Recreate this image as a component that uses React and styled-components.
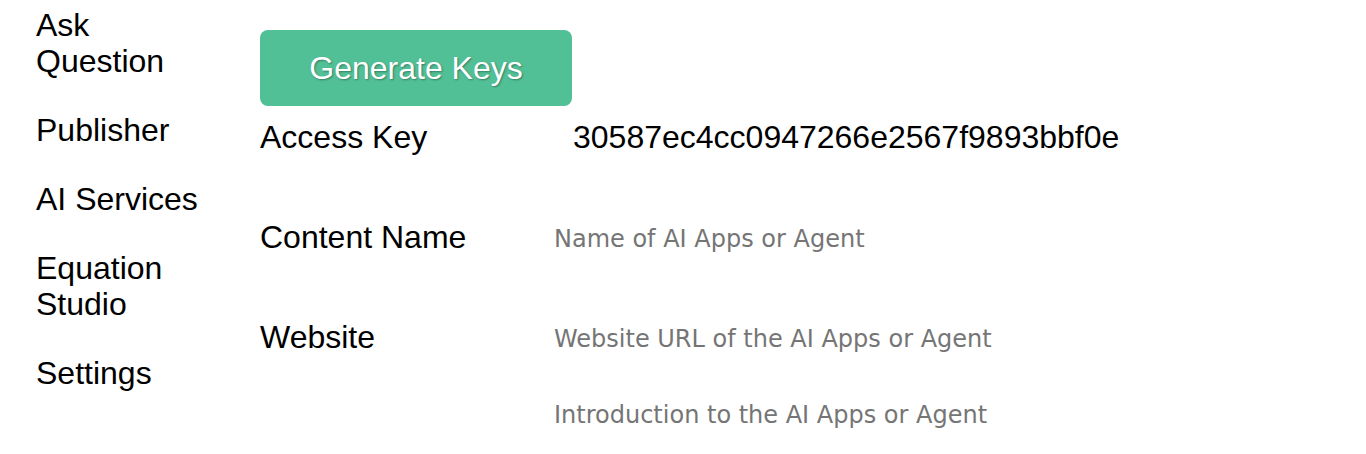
import React from 'react'
import styled, { createGlobalStyle } from 'styled-components'

const GlobalStyle = createGlobalStyle`
    html, body {
        margin: 0;
        padding: 0;
        background: #ffffff;
    }
    body {
        font-family: "Liberation Sans", Arial, Helvetica, sans-serif;
        color: #000000;
    }
`

const green = 'rgb(82,192,150)';
const placeholderGray = '#757575';

const Page = styled.div`
    display: flex;
    align-items: flex-start;
    width: 1366px;
    height: 454px;
    overflow: hidden;
`
const Sidebar = styled.nav`
    width: 260px;
    flex-shrink: 0;
    box-sizing: border-box;
    padding: 7px 0 0 36px;
`
const NavList = styled.ul`
    list-style: none;
    margin: 0;
    padding: 0;
    display: flex;
    flex-direction: column;
    gap: 33px;
`
const NavItem = styled.li`
    font-size: 32px;
    line-height: 36px;
    width: 180px;
`
const Main = styled.main`
    flex: 1;
    padding-top: 30px;
`
const GenerateButton = styled.button`
    display: block;
    width: 312px;
    height: 76px;
    border: none;
    border-radius: 8px;
    background: ${green};
    color: #ffffff;
    font-family: "Liberation Sans", Arial, sans-serif;
    font-size: 32px;
    text-shadow: 1px 1px 2px rgba(0,0,0,0.35);
    cursor: pointer;
`
const Form = styled.div`
    display: flex;
    flex-direction: column;
    margin-top: 13px;
`
const Row = styled.div`
    display: grid;
    grid-template-columns: 293px 1fr;
    align-items: center;
    margin-bottom: ${props => props.gap}px;
`
const Label = styled.label`
    font-size: 32px;
    line-height: 36px;
`
const KeyValue = styled.span`
    font-size: 32px;
    line-height: 36px;
    padding-left: 20px;
`
const Field = styled.input`
    box-sizing: border-box;
    border: none;
    outline: none;
    padding: 4px 0 0 1px;
    margin: 0;
    width: 560px;
    height: 36px;
    font-family: "DejaVu Sans", Verdana, Tahoma, sans-serif;
    font-size: 24px;
    background: transparent;
    &::placeholder {
        color: ${placeholderGray};
    }
`
const Intro = styled.textarea`
    border: none;
    outline: none;
    resize: none;
    padding: 1px 0 0 1px;
    margin: 0;
    width: 560px;
    height: 40px;
    font-family: "DejaVu Sans", Verdana, Tahoma, sans-serif;
    font-size: 24px;
    line-height: 30px;
    background: transparent;
    &::placeholder {
        color: ${placeholderGray};
    }
`

const navItems = ['Ask Question', 'Publisher', 'AI Services', 'Equation Studio', 'Settings']

export default function App() {
    return (
        <>
            <GlobalStyle />
            <Page>
                <Sidebar>
                    <NavList>
                        {navItems.map(item => (
                            <NavItem key={item}>{item}</NavItem>
                        ))}
                    </NavList>
                </Sidebar>
                <Main>
                    <GenerateButton>Generate Keys</GenerateButton>
                    <Form>
                        <Row gap={64}>
                            <Label>Access Key</Label>
                            <KeyValue>30587ec4cc0947266e2567f9893bbf0e</KeyValue>
                        </Row>
                        <Row gap={64}>
                            <Label>Content Name</Label>
                            <Field placeholder="Name of AI Apps or Agent" />
                        </Row>
                        <Row gap={44}>
                            <Label>Website</Label>
                            <Field placeholder="Website URL of the AI Apps or Agent" />
                        </Row>
                        <Row gap={0}>
                            <span />
                            <Intro placeholder="Introduction to the AI Apps or Agent" />
                        </Row>
                    </Form>
                </Main>
            </Page>
        </>
    )
}
